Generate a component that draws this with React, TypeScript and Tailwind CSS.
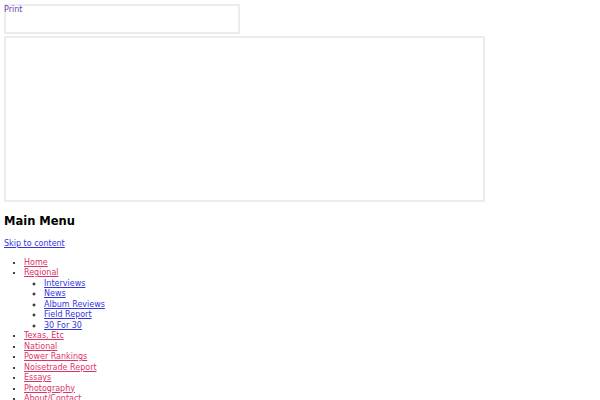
const mainItems = [
  { label: "Home" },
  {
    label: "Regional",
    children: ["Interviews", "News", "Album Reviews", "Field Report", "30 For 30"],
  },
  { label: "Texas, Etc" },
  { label: "National" },
  { label: "Power Rankings" },
  { label: "Noisetrade Report" },
  { label: "Essays" },
  { label: "Photography" },
  { label: "About/Contact" },
];

export default function App() {
  return (
    <div className="min-h-[400px] bg-white px-[4px] pt-[4px] font-['DejaVu_Sans',sans-serif] text-[8px] leading-[10.5px] text-black">
      {/* Print frame */}
      <div className="relative h-[30px] w-[236px] border-2 border-[#ececec]">
        <a href="#" className="absolute left-[-2px] top-[-1px] text-[#6b42b3]">
          Print
        </a>
      </div>

      {/* Embed frame */}
      <div className="mt-[2px] h-[166px] w-[481px] border-2 border-[#ececec]" />

      <h2 className="mt-[12px] text-[11.5px] font-bold leading-[14px]">Main Menu</h2>

      <a href="#" className="mt-[11px] block text-[#3535e0] underline">
        Skip to content
      </a>

      <ul className="mt-[8px] list-disc pl-[20px]">
        {mainItems.map((item) => (
          <li key={item.label}>
            <a href="#" className="text-[#dd3366] underline">
              {item.label}
            </a>
            {item.children && (
              <ul className="list-[circle] pl-[20px]">
                {item.children.map((c) => (
                  <li key={c}>
                    <a href="#" className="text-[#3535e0] underline">
                      {c}
                    </a>
                  </li>
                ))}
              </ul>
            )}
          </li>
        ))}
      </ul>
    </div>
  );
}
